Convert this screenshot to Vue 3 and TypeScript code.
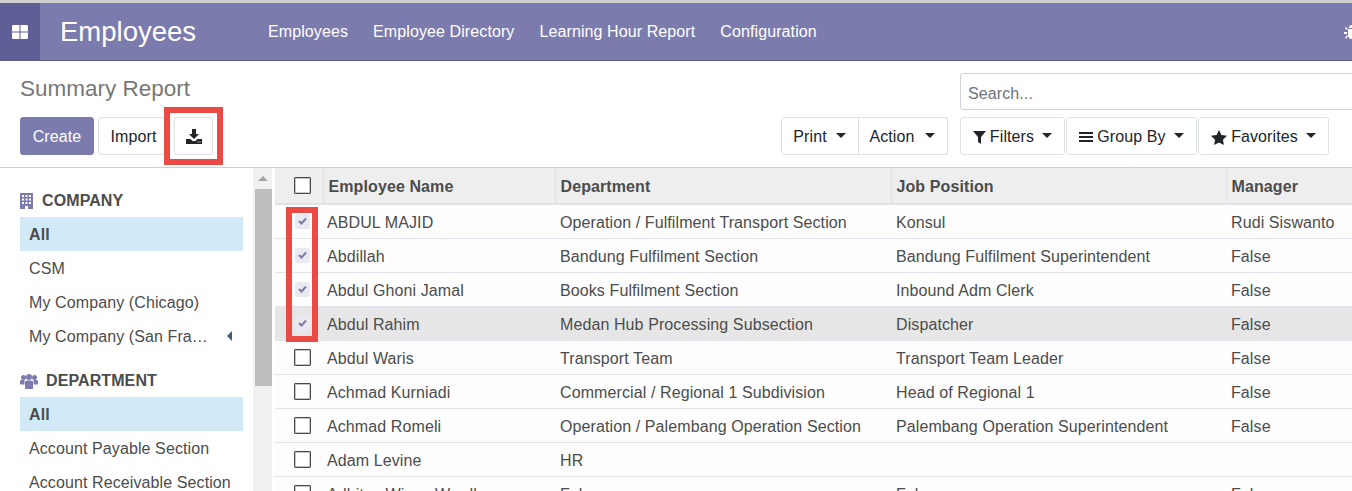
<script setup lang="ts">
interface Row { name: string; dept: string; job: string; mgr: string; checked?: boolean; hover?: boolean }
const rows: Row[] = [
  { name: 'ABDUL MAJID', dept: 'Operation / Fulfilment Transport Section', job: 'Konsul', mgr: 'Rudi Siswanto', checked: true },
  { name: 'Abdillah', dept: 'Bandung Fulfilment Section', job: 'Bandung Fulfilment Superintendent', mgr: 'False', checked: true },
  { name: 'Abdul Ghoni Jamal', dept: 'Books Fulfilment Section', job: 'Inbound Adm Clerk', mgr: 'False', checked: true },
  { name: 'Abdul Rahim', dept: 'Medan Hub Processing Subsection', job: 'Dispatcher', mgr: 'False', checked: true, hover: true },
  { name: 'Abdul Waris', dept: 'Transport Team', job: 'Transport Team Leader', mgr: 'False' },
  { name: 'Achmad Kurniadi', dept: 'Commercial / Regional 1 Subdivision', job: 'Head of Regional 1', mgr: 'False' },
  { name: 'Achmad Romeli', dept: 'Operation / Palembang Operation Section', job: 'Palembang Operation Superintendent', mgr: 'False' },
  { name: 'Adam Levine', dept: 'HR', job: '', mgr: '' },
  { name: 'Adhitya Wisnu Wardhana', dept: 'False', job: 'False', mgr: 'False' },
]
const navLinks = ['Employees', 'Employee Directory', 'Learning Hour Report', 'Configuration']
</script>

<template>
  <div class="page">
    <header class="nav">
      <div class="apps">
        <svg width="16" height="14" viewBox="0 0 16 14"><path fill="#fff" d="M0 1.500Q0 0 1.500 0H7.500V6.500H0ZM8.500 0H14.500Q16 0 16 1.500V6.500H8.500ZM0 7.500H7.500V14H1.500Q0 14 0 12.500ZM8.500 7.500H16V12.500Q16 14 14.500 14H8.500Z"/></svg>
      </div>
      <div class="brand">Employees</div>
      <nav class="links"><span v-for="l in navLinks" :key="l">{{ l }}</span></nav>
      <svg class="bug" width="16" height="16" viewBox="0 0 16 16"><path fill="#fff" d="M5 4Q5 1 8 1T11 4ZM4 5H12V11Q12 15 8 15T4 11ZM1 4 2 3 4 5 3 6ZM0 8H3V10H0ZM1 14 3 11 4 12 2 15Z"/></svg>
    </header>

    <section class="panel">
      <div class="panel-left">
        <h1>Summary Report</h1>
        <div class="left-btns">
          <button class="btn primary">Create</button>
          <button class="btn">Import</button>
          <span class="dl-wrap">
            <button class="btn dl">
              <svg width="16" height="15" viewBox="0 0 16 15"><path fill="#212529" d="M6 0H10V5H13L8 10 3 5H6ZM0 10H4.500L6.500 12H9.500L11.500 10H16V15H0Z"/><path fill="#fff" d="M11.500 12.500h1v1h-1zM13.500 12.500h1v1h-1z"/></svg>
            </button>
          </span>
        </div>
      </div>
      <div class="action-group">
        <button class="btn joined-l">Print<i class="caret"></i></button>
        <button class="btn joined-r">Action<i class="caret"></i></button>
      </div>
      <div class="panel-right">
        <div class="search">Search...</div>
        <div class="filter-btns">
          <button class="btn f1">
            <svg width="13" height="13" viewBox="0 0 13 13"><path fill="#212529" d="M0 0H13L8 6V13L5 11V6Z"/></svg>Filters<i class="caret"></i>
          </button>
          <button class="btn f2">
            <svg width="14" height="12" viewBox="0 0 14 12"><path fill="#212529" d="M0 1H14V3H0ZM0 5H14V7H0ZM0 9H14V11H0Z"/></svg>Group By<i class="caret"></i>
          </button>
          <button class="btn f3">
            <svg width="16" height="15" viewBox="0 0 15 14"><path fill="#212529" d="M7.500 0 9.800 4.700 15 5.400 11.200 9 12.100 14 7.500 11.600 2.900 14 3.800 9 0 5.400 5.200 4.700Z"/></svg>Favorites<i class="caret"></i>
          </button>
        </div>
      </div>
    </section>

    <main class="content">
      <aside class="side">
        <h2 class="side-h">
          <svg width="13" height="16" viewBox="0 0 13 16"><path fill="#7c7bad" fill-rule="evenodd" d="M0 0H13V16H8V13H5V16H0ZM2 2V4H4V2ZM5.500 2V4H7.500V2ZM9 2V4H11V2ZM2 5.500V7.500H4V5.500ZM5.500 5.500V7.500H7.500V5.500ZM9 5.500V7.500H11V5.500ZM2 9V11H4V9ZM5.500 9V11H7.500V9ZM9 9V11H11V9Z"/></svg>
          COMPANY
        </h2>
        <ul>
          <li class="active">All</li>
          <li>CSM</li>
          <li>My Company (Chicago)</li>
          <li class="has-arrow"><span class="ell">My Company (San Francisco)</span><i class="left-arrow"></i></li>
        </ul>
        <h2 class="side-h dept">
          <svg width="18" height="15" viewBox="0 0 18 15"><g fill="#7c7bad"><circle cx="3.500" cy="3.500" r="2.500"/><circle cx="14.500" cy="3.500" r="2.500"/><circle cx="9" cy="3" r="3"/><path d="M0 7Q0 6 2 6H4.500V10.500H1Q0 10.500 0 9.500ZM18 7Q18 6 16 6H13.500V10.500H17Q18 10.500 18 9.500ZM5 8Q5 6.500 7 6.500H11Q13 6.500 13 8V15H5Z"/></g></svg>
          DEPARTMENT
        </h2>
        <ul>
          <li class="active">All</li>
          <li>Account Payable Section</li>
          <li>Account Receivable Section</li>
        </ul>
      </aside>

      <div class="scrollbar">
        <i class="up"></i>
        <div class="thumb"></div>
      </div>

      <div class="table-wrap">
        <table>
          <colgroup>
            <col class="c0" /><col class="c1" /><col class="c2" /><col class="c3" /><col class="c4" />
          </colgroup>
          <thead>
            <tr>
              <th class="chk"><span class="box"></span></th>
              <th>Employee Name</th>
              <th>Department</th>
              <th>Job Position</th>
              <th>Manager</th>
            </tr>
          </thead>
          <tbody>
            <tr v-for="r in rows" :key="r.name" :class="{ hover: r.hover }">
              <td class="chk">
                <span v-if="r.checked" class="box-on">
                  <svg width="9" height="8" viewBox="0 0 9 8"><path fill="none" stroke="#7c7bad" stroke-width="2" d="M1 4 3.500 6.500 8 1.500"/></svg>
                </span>
                <span v-else class="box"></span>
              </td>
              <td>{{ r.name }}</td>
              <td>{{ r.dept }}</td>
              <td>{{ r.job }}</td>
              <td>{{ r.mgr }}</td>
            </tr>
          </tbody>
        </table>
        <div class="red-col"></div>
      </div>
    </main>
  </div>
</template>

<style>
html, body { margin: 0; background: #fff; overflow: hidden; }
</style>

<style scoped>
.page {
  width: 1352px;
  height: 491px;
  overflow: hidden;
  font-family: "Liberation Sans", Arial, sans-serif;
  font-size: 16px;
  letter-spacing: 0.1px;
  color: #4c4c4c;
  background: #fff;
  border-top: 3px solid #d0d0d0;
  box-sizing: border-box;
}
.nav {
  display: flex;
  align-items: center;
  height: 58px;
  box-sizing: border-box;
  background: #7c7bad;
  border-bottom: 1px solid #5f5e97;
  color: #fff;
  position: relative;
}
.apps {
  width: 40px;
  height: 57px;
  background: #5f5e97;
  display: flex;
  align-items: center;
  justify-content: center;
  flex: none;
}
.brand { font-size: 27.500px; letter-spacing: 0; margin-left: 20px; width: 208px; flex: none; padding-top: 1px; }
.links { display: flex; gap: 25px; }
.bug { position: absolute; left: 1344px; top: 21px; }

.panel {
  height: 107px;
  box-sizing: border-box;
  border-bottom: 1px solid #cfcfcf;
  display: flex;
  position: relative;
}
.panel-left { padding-left: 20px; width: 781px; box-sizing: border-box; flex: none; }
h1 {
  margin: 0;
  font-weight: 400;
  font-size: 22.500px;
  letter-spacing: 0;
  line-height: 26px;
  color: #777;
  padding-top: 15px;
}
.left-btns { display: flex; align-items: center; margin-top: 15px; }
.btn {
  font: inherit;
  letter-spacing: inherit;
  color: #212529;
  background: #fff;
  border: 1px solid #dee2e6;
  border-radius: 3px;
  height: 38px;
  box-sizing: border-box;
  display: inline-flex;
  align-items: center;
  justify-content: center;
  padding: 2px 12px 0;
  white-space: nowrap;
}
.primary { background: #7c7bad; border-color: #7c7bad; color: #fff; width: 74px; margin-right: 4px; padding: 2px 0 0; }
.left-btns .btn:nth-child(2) { width: 71px; padding: 2px 0 0; }
.dl-wrap { position: relative; margin-left: 5px; display: flex; }
.dl { width: 39px; padding: 0; }
.dl-wrap::after {
  content: "";
  position: absolute;
  inset: -10px;
  border: 6px solid #e94a44;
  pointer-events: none;
}
.caret {
  display: inline-block;
  width: 0;
  height: 0;
  border-left: 5px solid transparent;
  border-right: 5px solid transparent;
  border-top: 5px solid #212529;
  margin-left: 8px;
  margin-top: -3px;
}
.action-group { display: flex; padding-top: 56px; width: 179px; flex: none; }
.joined-l { width: 78px; border-radius: 3px 0 0 3px; padding: 2px 1px 0 0; }
.joined-l .caret { margin-left: 9px; }
.joined-r { width: 89px; border-left: 0; border-radius: 0 3px 3px 0; padding: 2px 2px 0 0; }
.joined-r .caret { margin-left: 10px; }
.panel-right { flex: 1; min-width: 0; padding-top: 12px; }
.search {
  height: 37px;
  width: 420px;
  box-sizing: border-box;
  border: 1px solid #ced4da;
  border-radius: 3px;
  padding-left: 7px;
  line-height: 40px;
  color: #6c757d;
}
.filter-btns { display: flex; margin-top: 7px; gap: 1px; }
.filter-btns svg { margin-right: 4px; }
.f1 { width: 105px; padding: 2px 0 0; }
.f2 { width: 131px; padding: 2px 0 0; }
.f3 { width: 131px; padding: 2px 0 0; }

.content { display: flex; height: 323px; overflow: hidden; }
.side { width: 253px; flex: none; padding: 15px 10px 0 20px; box-sizing: border-box; overflow: hidden; }
.side-h {
  margin: 0;
  font-size: 16px;
  height: 34px;
  box-sizing: border-box;
  padding-top: 2px;
  font-weight: 700;
  color: #4c4c4c;
  display: flex;
  align-items: center;
  gap: 9px;
}
.dept { margin-top: 10px; gap: 8px; }
ul { list-style: none; margin: 0; padding: 0; width: 223px; }
li { height: 34px; line-height: 36px; padding-left: 9px; box-sizing: border-box; color: #4c4c4c; }
.active { background: #d2e9f7; font-weight: 700; }
.has-arrow { display: flex; align-items: center; }
.ell { width: 180px; height: 34px; overflow: hidden; text-overflow: ellipsis; white-space: nowrap; }
.left-arrow {
  width: 0;
  height: 0;
  border-top: 5px solid transparent;
  border-bottom: 5px solid transparent;
  border-right: 5px solid #3e5f82;
  margin-left: 18px;
}
.scrollbar {
  width: 19px;
  margin-right: 3px;
  flex: none;
  background: #f1f1f1;
  position: relative;
}
.up {
  position: absolute;
  left: 5px;
  top: 8px;
  width: 0;
  height: 0;
  border-left: 5px solid transparent;
  border-right: 5px solid transparent;
  border-bottom: 5px solid #a3a3a3;
}
.thumb { position: absolute; left: 2px; top: 21px; width: 17px; height: 197px; background: #bdbdbd; }

.table-wrap { flex: 1; min-width: 0; position: relative; overflow: hidden; }
table { border-collapse: collapse; table-layout: fixed; width: 1160px; }
.c0 { width: 48px; }
.c1 { width: 232px; }
.c2 { width: 336px; }
.c3 { width: 335px; }
.c4 { width: 209px; }
th {
  background: #eee;
  height: 36px;
  padding: 2px 5px 0;
  text-align: left;
  font-size: 16px;
  font-weight: 700;
  color: #4c4c4c;
  border-left: 1px solid #dee2e6;
  border-bottom: 2px solid #dee2e6;
  box-sizing: border-box;
}
th:first-child { border-left: 0; }
td {
  height: 34px;
  padding: 4px 4px 0 5px;
  box-sizing: border-box;
  background: #fdfdfd;
  border-bottom: 1px solid #e2e2ec;
  color: #4c4c4c;
  white-space: nowrap;
  overflow: hidden;
}
td:nth-child(2) { padding-left: 4px; }
tr.hover td { background: #e6e6e6; }
.chk { text-align: center; padding: 0 0 0 7px; line-height: 0; }
.box {
  display: inline-block;
  width: 17px;
  height: 17px;
  box-sizing: border-box;
  border: 1px solid #4a4a4a;
  box-shadow: inset 0 0 0 1px #c4c6cc;
  border-radius: 1px;
  background: #fff;
  vertical-align: middle;
}
.box-on {
  display: inline-flex;
  align-items: center;
  justify-content: center;
  width: 15px;
  height: 15px;
  background: #e8e9f1;
  border-radius: 3px;
  vertical-align: middle;
}
.red-col {
  position: absolute;
  left: 11px;
  top: 39px;
  width: 32px;
  height: 135px;
  box-sizing: border-box;
  border: 6px solid #e94a44;
  pointer-events: none;
}
</style>
